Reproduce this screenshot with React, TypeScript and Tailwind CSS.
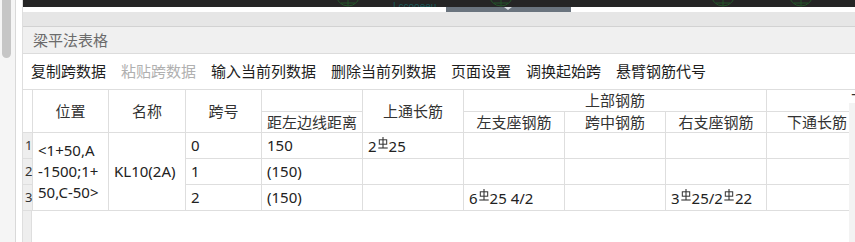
import React from "react";

function Rebar() {
  return (
    <svg width="10" height="12" viewBox="0 0 10 12" className="inline-block align-[3px] mx-[1px]">
      <line x1="5" y1="0" x2="5" y2="11" stroke="#333" strokeWidth="1.1" />
      <rect x="1.3" y="2.8" width="7.4" height="4.4" fill="none" stroke="#333" strokeWidth="1" />
      <line x1="0.3" y1="11" x2="9.7" y2="11" stroke="#333" strokeWidth="1.1" />
    </svg>
  );
}

const th = "border border-[#dedede] font-normal text-[#333] text-center p-0";
const td = "border border-[#dedede] text-[#222] text-left pl-[5px] p-0 align-middle";
const rn = "border border-[#dedede] bg-[#eeeeee] text-[#333] text-[13px] text-left pl-[2px] p-0";

export default function App() {
  const tools = ["复制跨数据", "粘贴跨数据", "输入当前列数据", "删除当前列数据", "页面设置", "调换起始跨", "悬臂钢筋代号"];
  return (
    <div className="w-[855px] h-[242px] overflow-hidden flex bg-white font-['Noto_Sans','Noto_Sans_CJK_SC',sans-serif] text-[15px] leading-none relative">
      {/* left strip with scrollbar */}
      <div className="w-[16px] h-full bg-[#f5f5f5] border-r border-[#d9d9d9] flex flex-col">
        <div className="ml-[2px] w-[9px] h-[58px] bg-[#c6c6c6] rounded-b-[5px]" />
      </div>
      <div className="w-[6px] h-full bg-white" />
      {/* main panel */}
      <div className="flex-1 h-full flex flex-col overflow-hidden border-l border-[#dedede] min-w-0">
        <div className="h-[7px] bg-[#252525] shrink-0 overflow-hidden">
          <svg width="833" height="7" viewBox="0 0 833 7">
            {[325, 478, 700, 778].map((cx) => (
              <g key={cx} stroke="#24552a" strokeWidth="1" fill="none">
                <circle cx={cx} cy={-6} r={12} />
                <line x1={cx} y1={-2} x2={cx} y2={6} />
                <line x1={cx - 7} y1={3} x2={cx + 7} y2={3} />
              </g>
            ))}
            <text x="370" y="10" fontSize="10" fill="#1a5a5a" fontFamily="Liberation Sans">Lccooeeu</text>
          </svg>
        </div>
        <div className="h-[5px] bg-white shrink-0 flex">
          <div className="ml-[423px] w-[125px] h-full bg-[#6a747e] flex justify-center">
            <div className="w-0 h-0 border-l-[4px] border-r-[4px] border-t-[3px] border-l-transparent border-r-transparent border-t-[#d8dde2] ml-[-2px]" />
          </div>
        </div>
        <div className="h-[15px] bg-[#e6e6e6] border-b border-[#d2d2d2] shrink-0" />
        <div className="h-[27px] bg-[#f0f0f0] border-b border-[#dcdcdc] shrink-0 flex items-center pl-[10px] text-[#6b6b6b]">
          梁平法表格
        </div>
        <div className="h-[35px] shrink-0 flex items-center pl-[8px] gap-[15px] text-[#1e1e1e] whitespace-nowrap">
          {tools.map((t, i) => (
            <span key={t} className={i === 1 ? "text-[#b0b0b0]" : ""}>{t}</span>
          ))}
        </div>
        <div className="shrink-0">
          <table className="table-fixed border-collapse w-[1070px] ml-[-1px]">
            <colgroup>
              <col className="w-[10px]" />
              <col className="w-[76px]" />
              <col className="w-[77px]" />
              <col className="w-[76px]" />
              <col className="w-[101px]" />
              <col className="w-[101px]" />
              <col className="w-[101px]" />
              <col className="w-[101px]" />
              <col className="w-[101px]" />
              <col className="w-[101px]" />
              <col className="w-[101px]" />
              <col className="w-[124px]" />
            </colgroup>
            <thead>
              <tr className="h-[22px]">
                <th rowSpan={2} className={th + " bg-white"} />
                <th rowSpan={2} className={th}>位置</th>
                <th rowSpan={2} className={th}>名称</th>
                <th rowSpan={2} className={th}>跨号</th>
                <th className={th} />
                <th rowSpan={2} className={th}>上通长筋</th>
                <th colSpan={3} className={th}>上部钢筋</th>
                <th colSpan={3} className={th + " text-left pl-[84px]"}>下部钢筋</th>
              </tr>
              <tr className="h-[21px]">
                <th className={th}>距左边线距离</th>
                <th className={th}>左支座钢筋</th>
                <th className={th}>跨中钢筋</th>
                <th className={th}>右支座钢筋</th>
                <th className={th}>下通长筋</th>
                <th className={th}>跨中钢筋</th>
                <th className={th}>右支座钢筋</th>
              </tr>
            </thead>
            <tbody>
              <tr className="h-[26px]">
                <td className={rn}>1</td>
                <td rowSpan={3} className={td + " leading-[21px] whitespace-nowrap"}>
                  &lt;1+50,A<br />-1500;1+<br />50,C-50&gt;
                </td>
                <td rowSpan={3} className={td}>KL10(2A)</td>
                <td className={td}>0</td>
                <td className={td}>150</td>
                <td className={td + " whitespace-nowrap"}>2<Rebar />25</td>
                <td className={td} />
                <td className={td} />
                <td className={td} />
                <td className={td} />
                <td className={td} />
                <td className={td} />
              </tr>
              <tr className="h-[26px]">
                <td className={rn}>2</td>
                <td className={td}>1</td>
                <td className={td}>(150)</td>
                <td className={td} />
                <td className={td} />
                <td className={td} />
                <td className={td} />
                <td className={td} />
                <td className={td} />
                <td className={td} />
              </tr>
              <tr className="h-[26px]">
                <td className={rn}>3</td>
                <td className={td}>2</td>
                <td className={td}>(150)</td>
                <td className={td} />
                <td className={td + " whitespace-nowrap"}>6<Rebar />25 4/2</td>
                <td className={td} />
                <td className={td + " whitespace-nowrap"}>3<Rebar />25/2<Rebar />22</td>
                <td className={td} />
                <td className={td} />
                <td className={td} />
                <td className={td} />
              </tr>
            </tbody>
          </table>
        </div>
        <div className="flex-1 flex">
          <div className="w-[9px] bg-[#eeeeee] border-r border-[#dedede]" />
        </div>
      </div>
      <div className="absolute right-0 top-[103px] bottom-0 w-[6px] bg-[#f3f3f3]" />
    </div>
  );
}
